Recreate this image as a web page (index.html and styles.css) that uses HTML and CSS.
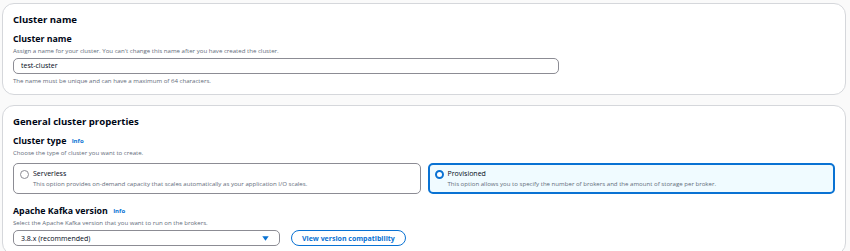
FILE: index.html
```html
<!DOCTYPE html>
<html lang="en">
<head>
    <meta charset="UTF-8">
    <title>Create cluster</title>
    <link rel="stylesheet" href="styles.css">
</head>
<body>
    <div class="container">
        <div class="card">
            <h2>Cluster name</h2>
            <div class="field">
                <label class="field-label">Cluster name</label>
                <p class="field-desc">Assign a name for your cluster. You can't change this name after you have created the cluster.</p>
                <div class="input">test-cluster</div>
                <p class="field-hint">The name must be unique and can have a maximum of 64 characters.</p>
            </div>
        </div>

        <div class="card">
            <h2>General cluster properties</h2>
            <div class="field">
                <label class="field-label">Cluster type <a class="info">Info</a></label>
                <p class="field-desc">Choose the type of cluster you want to create.</p>
                <div class="tiles">
                    <div class="tile">
                        <span class="radio"></span>
                        <div>
                            <div class="tile-title">Serverless</div>
                            <div class="tile-desc">This option provides on-demand capacity that scales automatically as your application I/O scales.</div>
                        </div>
                    </div>
                    <div class="tile selected">
                        <span class="radio checked"></span>
                        <div>
                            <div class="tile-title">Provisioned</div>
                            <div class="tile-desc">This option allows you to specify the number of brokers and the amount of storage per broker.</div>
                        </div>
                    </div>
                </div>
            </div>
            <div class="field kafka">
                <label class="field-label">Apache Kafka version <a class="info">Info</a></label>
                <p class="field-desc">Select the Apache Kafka version that you want to run on the brokers.</p>
                <div class="select-row">
                    <div class="select">
                        <span>3.8.x (recommended)</span>
                        <svg width="7" height="5" viewBox="0 0 7 5"><path d="M0.3 0.3 L6.7 0.3 L3.5 4.7 Z" fill="#0972d3"/></svg>
                    </div>
                    <button class="btn">View version compatibility</button>
                </div>
            </div>
        </div>
    </div>
</body>
</html>
```

FILE: styles.css
```css
* {
    margin: 0;
    padding: 0;
    box-sizing: border-box;
}
body {
    font-family: "Open Sans", "Noto Sans", sans-serif;
    background: #fafafa;
    color: #000716;
    overflow: hidden;
}
.container {
    padding: 3px 4px 0 2px;
    display: flex;
    flex-direction: column;
    gap: 10px;
}
.card {
    background: #fff;
    border: 1px solid #d5d7db;
    border-radius: 12px;
    padding: 9px 10px 8px 10px;
}
.card h2 {
    font-size: 9.6px;
    font-weight: 700;
    line-height: 14px;
    margin-bottom: 6px;
}
.field-label {
    display: block;
    font-size: 8.8px;
    font-weight: 700;
    line-height: 12px;
}
.info {
    color: #0972d3;
    font-size: 6px;
    font-weight: 700;
    margin-left: 3px;
    vertical-align: 1px;
}
.field-desc, .field-hint {
    font-size: 6.1px;
    line-height: 10px;
    color: #5f6b7a;
}
.field-desc {
    margin-top: 1px;
    margin-bottom: 2px;
}
.field-hint {
    margin-top: 2px;
}
.input {
    width: 546px;
    height: 16px;
    border: 1px solid #8c8c94;
    border-radius: 5px;
    padding: 0 7px;
    font-size: 7px;
    line-height: 14px;
}
.tiles {
    display: grid;
    grid-template-columns: 1fr 1fr;
    gap: 7px;
    margin-top: 5px;
}
.tile {
    display: flex;
    gap: 4px;
    align-items: flex-start;
    height: 31px;
    border: 1px solid #8c8c94;
    border-radius: 5px;
    padding: 5px 6px 4px 6px;
}
.tile.selected {
    border: 2px solid #0972d3;
    background: #f0fbff;
    padding: 4px 5px 3px 5px;
}
.radio {
    width: 9px;
    height: 9px;
    border: 1px solid #8c8c94;
    border-radius: 50%;
    margin-top: 1px;
    flex-shrink: 0;
}
.radio.checked {
    border: 2.5px solid #0972d3;
    background: #fff;
}
.tile-title {
    font-size: 7px;
    line-height: 10px;
}
.tile-desc {
    font-size: 6.1px;
    line-height: 10px;
    color: #5f6b7a;
}
.kafka {
    margin-top: 11px;
}
.select-row {
    display: flex;
    align-items: center;
    gap: 11px;
}
.select {
    width: 267px;
    height: 16px;
    border: 1px solid #8c8c94;
    border-radius: 5px;
    padding: 0 10px 0 7px;
    display: flex;
    justify-content: space-between;
    align-items: center;
    font-size: 7px;
}
.btn {
    height: 16px;
    padding: 0 10px;
    border: 1.5px solid #0972d3;
    border-radius: 9px;
    background: #fff;
    color: #0972d3;
    font-family: inherit;
    font-size: 7px;
    font-weight: 700;
}
```
